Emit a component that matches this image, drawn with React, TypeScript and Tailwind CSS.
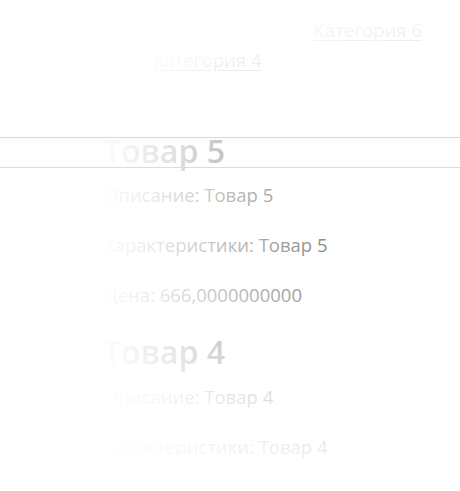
const products = [
  { name: 'Товар 5', price: '666,0000000000' },
  { name: 'Товар 4', price: '666,0000000000' },
];

export default function App() {
  return (
    <div className="relative h-[491px] overflow-hidden bg-white font-['Open_Sans',sans-serif] text-[#666]">
      {/* Header */}
      <header className="h-[137px]">
        <div className="flex justify-end pr-[38px] pt-[17px] text-[18.5px] leading-[26px]">
          <a href="#" className="underline underline-offset-[3px]">
            Категория 6
          </a>
        </div>
        <div className="mt-[4px] pl-[153px] text-[18.5px] leading-[26px]">
          <a href="#" className="underline underline-offset-[3px]">
            Категория 4
          </a>
        </div>
      </header>
      <div className="relative z-20 h-px bg-[#d9d9d9] shadow-[0_2px_4px_rgba(0,0,0,0.08)]" />

      {/* Products */}
      {products.map((p, i) => (
        <section key={i}>
          {i === 0 ? (
            <>
              <div className="h-[31px]">
                <h2 className="-mt-[2px] pl-[103px] text-[32px] font-semibold leading-[30px]">{p.name}</h2>
              </div>
              <div className="relative z-20 h-px bg-[#dcdcdc]" />
            </>
          ) : (
            <h2 className="mt-[29px] pl-[103px] text-[32px] font-semibold leading-[30px]">{p.name}</h2>
          )}
          <div className={`pl-[104px] text-[18.5px] leading-[26px] ${i === 0 ? 'pt-[14px]' : 'pt-[17px]'}`}>
            <p className="mb-[24px]">Описание: {p.name}</p>
            <p className="mb-[24px]">Характеристики: {p.name}</p>
            <p>Цена: {p.price}</p>
          </div>
        </section>
      ))}

      {/* White fade over the text: strong on the left, top and bottom; the lines sit above it */}
      <div className="pointer-events-none absolute inset-0 z-10 bg-[linear-gradient(to_bottom,#fffffff5_0px,#ffffffea_30px,#ffffffd1_60px,#ffffff4d_110px,#ffffff1a_145px,#ffffff00_195px,#ffffff00_245px,#ffffff0d_295px,#ffffff45_352px,#ffffffa1_397px,#ffffffcf_447px,#fffffff2_491px),linear-gradient(to_right,#ffffff_100px,#fffffff7_110px,#ffffffcc_170px,#ffffff94_225px,#ffffff38_330px,#ffffff00_420px)]" />
    </div>
  );
}
